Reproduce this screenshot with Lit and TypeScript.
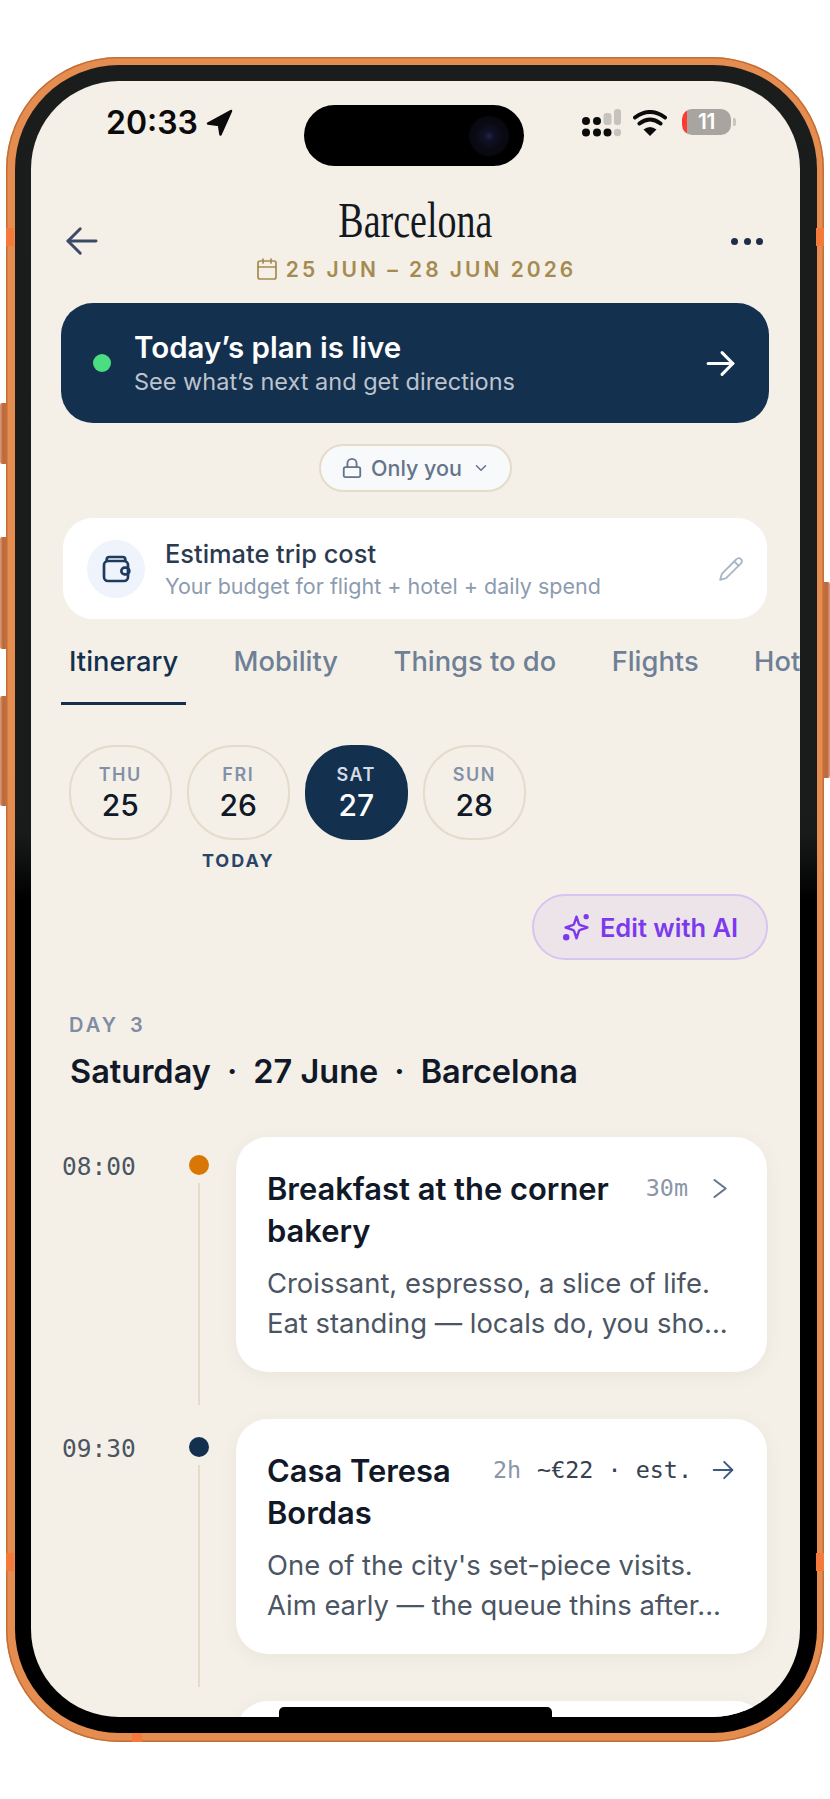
import { LitElement, css, html, svg } from "lit";
import { customElement } from "lit/decorators.js";

const tabs = ["Itinerary", "Mobility", "Things to do", "Flights", "Hotels"];

const days = [
  { name: "THU", num: "25", note: "" },
  { name: "FRI", num: "26", note: "TODAY" },
  { name: "SAT", num: "27", note: "", active: true },
  { name: "SUN", num: "28", note: "" },
];

const stops = [
  {
    time: "08:00",
    dot: "#d97706",
    title: "Breakfast at the corner bakery",
    dur: "30m",
    cost: "",
    desc: "Croissant, espresso, a slice of life. Eat standing — locals do, you sho...",
  },
  {
    time: "09:30",
    dot: "#14304f",
    title: "Casa Teresa Bordas",
    dur: "2h",
    cost: "~€22 · est.",
    desc: "One of the city's set-piece visits. Aim early — the queue thins after...",
  },
];

const icon = (size: number, body: unknown, cls = "", sw = 2) => html`<svg
  class=${cls}
  width=${size}
  height=${size}
  viewBox="0 0 24 24"
  fill="none"
  stroke="currentColor"
  stroke-width=${sw}
  stroke-linecap="round"
  stroke-linejoin="round"
>
  ${body}
</svg>`;

const arrowRight = svg`<path d="M4 12h16" /><path d="m13 5 7 7-7 7" />`;

@customElement("app-root")
export class AppRoot extends LitElement {
  static styles = css`
    :host {
      display: block;
      width: 830px;
      height: 1799px;
      background: #fff;
      font-family: Inter, "Noto Sans", sans-serif;
      overflow: hidden;
    }

    .frame {
      position: relative;
      box-sizing: border-box;
      width: 818px;
      height: 1685px;
      margin: 57px 6px 0;
      padding: 8px 7px 9px 9px;
      border-radius: 112px;
      background: #e58d50;
      box-shadow: inset 0 0 0 1.5px #c46e35;
    }

    .btn {
      position: absolute;
      width: 6px;
      background: linear-gradient(90deg, #dd9c7c, #b9683a 50%, #c1713f);
      border-radius: 2px 0 0 2px;
    }
    .btn.left {
      left: -6px;
    }
    .btn.right {
      right: -6px;
      transform: scaleX(-1);
    }
    .b1 {
      top: 346px;
      height: 61px;
    }
    .b2 {
      top: 480px;
      height: 112px;
    }
    .b3 {
      top: 639px;
      height: 110px;
    }
    .b4 {
      top: 525px;
      height: 196px;
    }

    .band {
      position: absolute;
      background: #f47a3c;
    }
    .band.v {
      width: 8px;
      height: 18px;
    }
    .band.h {
      width: 10px;
      height: 9px;
      left: 126px;
      bottom: 0;
    }

    .bezel {
      box-sizing: border-box;
      height: 100%;
      padding: 16px 17px 16px 16px;
      border-radius: 104px;
      background: linear-gradient(#1b1d1d 0, #191b1b 46%, #000 50%);
    }

    .screen {
      position: relative;
      height: 1636px;
      border-radius: 88px;
      background: #f4f0e8;
      overflow: hidden;
    }

    .status {
      position: relative;
      display: flex;
      justify-content: space-between;
      box-sizing: border-box;
      height: 110px;
      padding: 22px 69px 0 75px;
    }
    .clock {
      display: flex;
      gap: 8px;
      height: 38px;
      align-items: center;
      font-size: 32px;
      font-weight: 600;
      color: #0b0b0b;
    }
    .island {
      position: absolute;
      left: 273px;
      top: 24px;
      width: 220px;
      height: 61px;
      border-radius: 31px;
      background: #000;
    }
    .lens {
      position: absolute;
      right: 15px;
      top: 11px;
      width: 40px;
      height: 40px;
      border-radius: 50%;
      background: radial-gradient(circle, #23234f 0, #111128 16%, #0a0a14 48%, #050508 100%);
    }
    .sys {
      display: flex;
      align-items: flex-start;
      padding-top: 6px;
    }
    .sys .wifi {
      margin: 1px 15px 0 11px;
    }
    .battery {
      position: relative;
      width: 49px;
      height: 26px;
      border-radius: 10px;
      background: linear-gradient(90deg, #ff3b30 5px, #a8a5a0 5px);
      color: #fff;
      font-size: 21px;
      font-weight: 600;
      line-height: 26px;
      text-align: center;
      letter-spacing: -0.5px;
    }
    .battery::after {
      content: "";
      position: absolute;
      right: -5px;
      top: 9px;
      width: 3px;
      height: 8px;
      border-radius: 0 2px 2px 0;
      background: #c9c6c0;
    }

    .top {
      display: grid;
      grid-template-columns: 1fr auto 1fr;
      align-items: center;
      height: 112px;
      box-sizing: border-box;
      padding: 6px 37px 23px;
    }
    .back {
      color: #3b4a66;
      margin: 5px 0 0 -7px;
      display: flex;
    }
    .more {
      justify-self: end;
      display: flex;
      gap: 5.5px;
      margin-top: 5px;
    }
    .more i {
      width: 7px;
      height: 7px;
      border-radius: 50%;
      background: #1f2d4d;
    }
    .heading {
      display: flex;
      flex-direction: column;
      align-items: center;
    }
    .city {
      font-family: "Liberation Serif", serif;
      font-size: 50px;
      line-height: 46px;
      color: #14181f;
      transform: scaleX(0.76);
    }
    .dates {
      display: flex;
      align-items: center;
      gap: 7px;
      margin-top: 15px;
      height: 22px;
      font-size: 21px;
      font-weight: 600;
      letter-spacing: 3px;
      color: #a58b50;
    }

    .banner {
      display: flex;
      align-items: center;
      box-sizing: border-box;
      height: 120px;
      margin: 0 31px 0 30px;
      padding: 0 30px 0 32px;
      border-radius: 32px;
      background: #14304f;
      color: #fff;
    }
    .live {
      width: 18px;
      height: 18px;
      border-radius: 50%;
      background: #4ade80;
      margin-right: 23px;
    }
    .banner-text {
      flex: 1;
      padding-top: 1px;
    }
    .banner-title {
      font-size: 29.5px;
      line-height: 34px;
      font-weight: 600;
    }
    .banner-sub {
      margin-top: 3px;
      font-size: 23.5px;
      line-height: 30px;
      color: rgba(255, 255, 255, 0.72);
    }

    .pill-row {
      display: flex;
      justify-content: center;
      margin-top: 21px;
    }
    .pill {
      display: flex;
      align-items: center;
      box-sizing: border-box;
      height: 48px;
      padding: 0 20px;
      gap: 8px;
      border: 2px solid #e4dcc8;
      border-radius: 24px;
      background: #f8f9fb;
      font-size: 21.5px;
      font-weight: 500;
      color: #64748b;
    }
    .pill .chev {
      margin-left: 2px;
    }

    .cost {
      display: flex;
      align-items: center;
      box-sizing: border-box;
      height: 101px;
      margin: 26px 33px 0 32px;
      padding: 0 23px 0 24px;
      border-radius: 30px;
      background: #fff;
    }
    .cost-icon {
      display: flex;
      align-items: center;
      justify-content: center;
      width: 58px;
      height: 58px;
      border-radius: 50%;
      background: #eef3fc;
      color: #1e3a5f;
      margin-right: 20px;
    }
    .cost-text {
      flex: 1;
    }
    .cost-title {
      font-size: 25.4px;
      line-height: 34px;
      font-weight: 500;
      color: #2c3a50;
    }
    .cost-sub {
      font-size: 21.5px;
      line-height: 30px;
      color: #8d9bb0;
    }
    .cost-edit {
      color: #a9b6c6;
      display: flex;
    }

    .tabs {
      display: flex;
      gap: 39.5px;
      margin: 21px 0 0 30px;
      height: 65px;
      white-space: nowrap;
    }
    .tab {
      box-sizing: border-box;
      height: 65px;
      padding: 5px 8px 0;
      font-size: 27.3px;
      line-height: 34px;
      font-weight: 500;
      color: #6f7f95;
    }
    .tab.on {
      color: #14304f;
      border-bottom: 3px solid #14304f;
    }

    .days {
      display: flex;
      gap: 15.5px;
      margin: 40px 0 0 38px;
    }
    .day-col {
      width: 102.5px;
      display: flex;
      flex-direction: column;
      align-items: center;
    }
    .day {
      box-sizing: border-box;
      display: flex;
      flex-direction: column;
      align-items: center;
      justify-content: center;
      width: 102.5px;
      height: 95px;
      border: 2px solid #e2dccb;
      border-radius: 46px;
      color: #111827;
    }
    .day.on {
      background: #14304f;
      border-color: #14304f;
      color: #fff;
    }
    .day-name {
      font-size: 18px;
      line-height: 24px;
      font-weight: 600;
      letter-spacing: 1.5px;
      color: #8391a8;
    }
    .day.on .day-name {
      color: #d5dbe4;
    }
    .day-num {
      font-size: 30px;
      line-height: 36px;
      font-weight: 500;
    }
    .day-note {
      height: 22px;
      margin-top: 10px;
      font-size: 18px;
      line-height: 22px;
      font-weight: 700;
      letter-spacing: 2px;
      color: #2a4468;
    }

    .ai-row {
      display: flex;
      justify-content: flex-end;
      margin: 22px 32px 0 0;
    }
    .ai {
      display: flex;
      align-items: center;
      gap: 9px;
      box-sizing: border-box;
      height: 66px;
      width: 236px;
      justify-content: center;
      border: 2px solid #d8c4f0;
      border-radius: 33px;
      background: #ede4ea;
      color: #7c3aed;
      font-size: 25.5px;
      font-weight: 600;
    }

    .day-label {
      margin: 53px 0 0 38px;
      font-size: 20px;
      line-height: 24px;
      font-weight: 600;
      letter-spacing: 3px;
      word-spacing: 3px;
      color: #7f8ca3;
    }
    .day-title {
      display: flex;
      gap: 16px;
      margin: 15px 0 0 39px;
      font-size: 32.5px;
      line-height: 40px;
      font-weight: 600;
      color: #111827;
    }

    .timeline {
      margin: 45px 33px 0 31px;
    }
    .stop {
      display: grid;
      grid-template-columns: 127px 20px 1fr;
      height: 282px;
    }
    .time {
      padding-top: 15px;
      font-family: "DejaVu Sans Mono", monospace;
      font-size: 24.5px;
      line-height: 30px;
      color: #4b5563;
    }
    .rail {
      display: flex;
      flex-direction: column;
      align-items: center;
      padding: 18px 0 14px;
    }
    .dot {
      flex: none;
      width: 20px;
      height: 20px;
      border-radius: 50%;
    }
    .line {
      flex: 1;
      width: 2px;
      margin-top: 8px;
      background: #e2dccb;
    }
    .card {
      box-sizing: border-box;
      height: 235px;
      margin-left: 27px;
      padding: 31px 29px 0 31px;
      border-radius: 32px;
      background: #fff;
      box-shadow: 0 4px 18px rgba(120, 100, 60, 0.07);
    }
    .card-head {
      display: flex;
      align-items: flex-start;
      gap: 20px;
    }
    .card-title {
      flex: 1;
      font-size: 30.9px;
      line-height: 42px;
      font-weight: 600;
      color: #111827;
    }
    .meta {
      display: flex;
      gap: 16px;
      align-items: center;
      height: 32px;
      margin-top: 4px;
      font-family: "DejaVu Sans Mono", monospace;
      font-size: 23.4px;
      white-space: nowrap;
      color: #8a96a8;
    }
    .meta .price {
      color: #374151;
    }
    .go {
      flex: none;
      display: flex;
      height: 32px;
      align-items: center;
    }
    .go.chev {
      color: #64748b;
      margin: 4px 5px 0 -2px;
    }
    .go.arrow {
      color: #3a5a80;
      margin: 4px 1px 0 -3px;
    }
    .desc {
      margin-top: 12px;
      font-size: 27.4px;
      line-height: 39.5px;
      color: #4b5563;
    }

    .home {
      position: absolute;
      left: 248px;
      bottom: 0;
      width: 273px;
      height: 10px;
      border-radius: 5px 5px 0 0;
      background: #000;
    }
  `;

  private renderStatus() {
    return html`<div class="status">
      <div class="clock">
        20:33
        <svg width="27" height="27" viewBox="0 0 27 27">
          <path
            d="M25 2 2 14.5l11 1.5 1.5 9.5Z"
            fill="#0b0b0b"
            stroke="#0b0b0b"
            stroke-width="2.5"
            stroke-linejoin="round"
          />
        </svg>
      </div>
      <div class="island"><div class="lens"></div></div>
      <div class="sys">
        <svg width="40" height="29" viewBox="0 0 40 29">
          <g fill="#0b0b0b">
            <circle cx="4" cy="12" r="4" />
            <circle cx="15" cy="12" r="4" />
            <circle cx="4" cy="23.5" r="4" />
            <circle cx="15" cy="23.5" r="4" />
            <circle cx="25.5" cy="23.5" r="4" />
          </g>
          <g fill="#c6c3bc">
            <rect x="21.5" y="4" width="8" height="12" rx="3" />
            <rect x="32" y="0" width="7" height="16" rx="3" />
            <circle cx="35.5" cy="23.5" r="3.7" />
          </g>
        </svg>
        <svg class="wifi" width="34" height="26" viewBox="0 0 34 26">
          <path d="M17 26 10.5 19.5Q17 14.5 23.5 19.5Z" fill="#0b0b0b" />
          <path
            d="M6.5 13.5Q17 5.5 27.5 13.5M2 7.5Q17-3.5 32 7.5"
            fill="none"
            stroke="#0b0b0b"
            stroke-width="4"
            stroke-linecap="round"
          />
        </svg>
        <div class="battery">11</div>
      </div>
    </div>`;
  }

  private renderHeader() {
    return html`<div class="top">
        <div class="back">
          ${icon(42, svg`<path d="M20 12H4" /><path d="m11 5-7 7 7 7" />`, "", 1.7)}
        </div>
        <div class="heading">
          <div class="city">Barcelona</div>
          <div class="dates">
            ${icon(
              24,
              svg`<rect x="3" y="4" width="18" height="18" rx="2" /><path d="M8 2v4M16 2v4M3 10h18" />`,
              "",
              1.7,
            )}
            25 JUN – 28 JUN 2026
          </div>
        </div>
        <div class="more"><i></i><i></i><i></i></div>
      </div>
      <div class="banner">
        <div class="live"></div>
        <div class="banner-text">
          <div class="banner-title">Today’s plan is live</div>
          <div class="banner-sub">See what’s next and get directions</div>
        </div>
        ${icon(37, arrowRight)}
      </div>
      <div class="pill-row">
        <div class="pill">
          ${icon(
            22,
            svg`<rect x="3" y="11" width="18" height="11" rx="2" /><path d="M7 11V7a5 5 0 0 1 10 0v4" />`,
          )}
          Only you
          ${icon(18, svg`<path d="m6 9 6 6 6-6" />`, "chev")}
        </div>
      </div>
      <div class="cost">
        <div class="cost-icon">
          ${icon(
            32,
            svg`<path d="M5 6V5a2 2 0 0 1 2-2h10a2 2 0 0 1 2 2v1" /><rect x="3" y="6" width="18" height="15" rx="3" /><rect x="16" y="11" width="6" height="5" rx="2.5" />`,
          )}
        </div>
        <div class="cost-text">
          <div class="cost-title">Estimate trip cost</div>
          <div class="cost-sub">Your budget for flight + hotel + daily spend</div>
        </div>
        <div class="cost-edit">
          ${icon(
            26,
            svg`<path d="M17 3a2.85 2.83 0 1 1 4 4L7.5 20.5 2 22l1.5-5.5Z" /><path d="m15 5 4 4" />`,
            "",
            1.7,
          )}
        </div>
      </div>`;
  }

  private renderPlan() {
    return html`<div class="tabs">
        ${tabs.map((t, i) => html`<div class="tab ${i === 0 ? "on" : ""}">${t}</div>`)}
      </div>
      <div class="days">
        ${days.map(
          (d) => html`<div class="day-col">
            <div class="day ${d.active ? "on" : ""}">
              <div class="day-name">${d.name}</div>
              <div class="day-num">${d.num}</div>
            </div>
            <div class="day-note">${d.note}</div>
          </div>`,
        )}
      </div>
      <div class="ai-row">
        <div class="ai">
          ${icon(
            29,
            svg`<path d="M12 3 10.1 8.8a2 2 0 0 1-1.3 1.3L3 12l5.8 1.9a2 2 0 0 1 1.3 1.3L12 21l1.9-5.8a2 2 0 0 1 1.3-1.3L21 12l-5.8-1.9a2 2 0 0 1-1.3-1.3Z" /><circle cx="20" cy="3" r="1.2" fill="currentColor" /><circle cx="3.5" cy="20" r="1.7" fill="currentColor" />`,
          )}
          Edit with AI
        </div>
      </div>
      <div class="day-label">DAY 3</div>
      <div class="day-title">
        <span>Saturday</span><span>·</span><span>27 June</span><span>·</span><span>Barcelona</span>
      </div>
      <div class="timeline">
        ${stops.map(
          (s) => html`<div class="stop">
            <div class="time">${s.time}</div>
            <div class="rail">
              <div class="dot" style="background:${s.dot}"></div>
              <div class="line"></div>
            </div>
            <div class="card">
              <div class="card-head">
                <div class="card-title">${s.title}</div>
                <div class="meta">
                  <span>${s.dur}</span>
                  ${s.cost ? html`<span class="price">${s.cost}</span>` : ""}
                </div>
                ${s.cost
                  ? html`<div class="go arrow">${icon(28, arrowRight, "", 1.6)}</div>`
                  : html`<div class="go chev">
                      ${icon(27, svg`<path d="m7.5 4.5 10 7.5-10 7.5" />`, "", 1.8)}
                    </div>`}
              </div>
              <div class="desc">${s.desc}</div>
            </div>
          </div>`,
        )}
        <div class="stop">
          <div></div>
          <div></div>
          <div class="card"></div>
        </div>
      </div>`;
  }

  render() {
    return html`<div class="frame">
      <div class="btn left b1"></div>
      <div class="btn left b2"></div>
      <div class="btn left b3"></div>
      <div class="btn right b4"></div>
      <div class="band v" style="left:0;top:171px"></div>
      <div class="band v" style="right:0;top:171px"></div>
      <div class="band v" style="left:0;top:1496px"></div>
      <div class="band v" style="right:0;top:1496px"></div>
      <div class="band h"></div>
      <div class="bezel">
        <div class="screen">
          ${this.renderStatus()} ${this.renderHeader()} ${this.renderPlan()}
          <div class="home"></div>
        </div>
      </div>
    </div>`;
  }
}
